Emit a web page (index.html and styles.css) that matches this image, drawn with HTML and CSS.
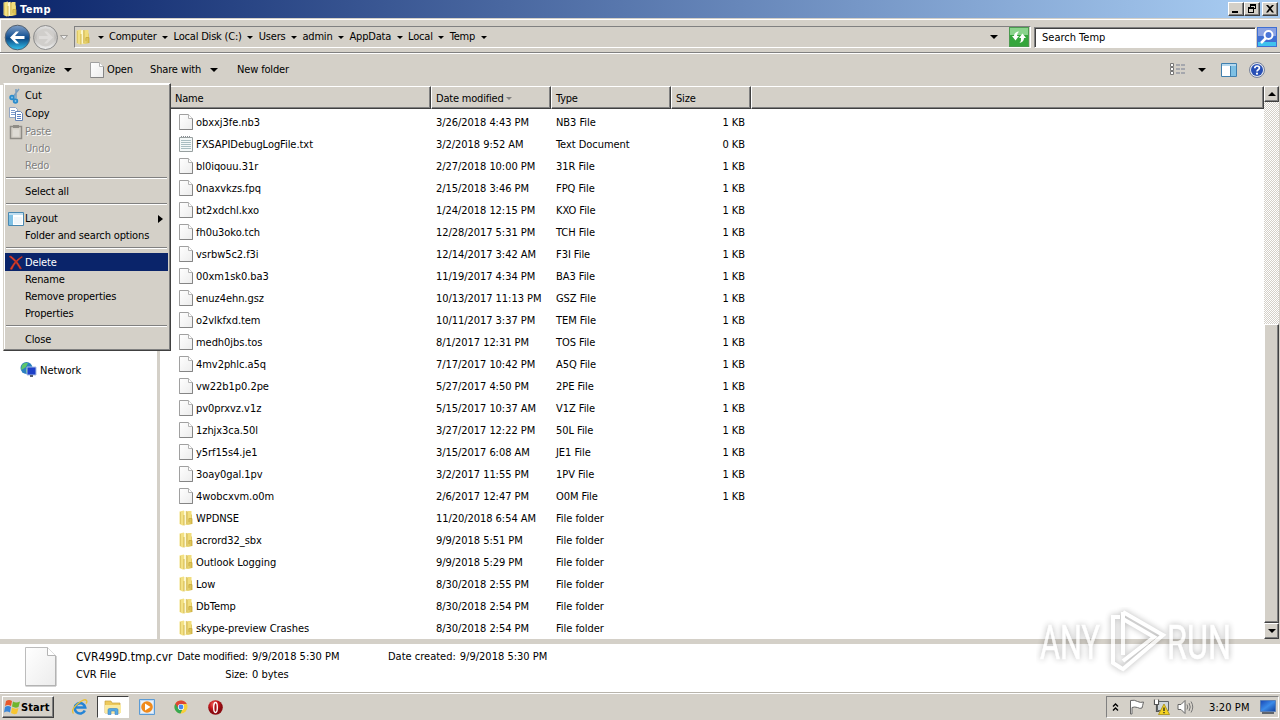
FILE: index.html
```html
<!DOCTYPE html>
<html lang="en">
<head>
  <meta charset="UTF-8">
  <title>Temp</title>
  <link rel="stylesheet" href="styles.css">
</head>
<body>

<!-- Shared icons -->
<svg class="sprites" width="0" height="0">
  <defs>
    <linearGradient id="gFolder" x1="0" x2="1"><stop offset="0" stop-color="#f8ec9a"/><stop offset="1" stop-color="#d6bb4a"/></linearGradient>
    <linearGradient id="gPage" x1="0" y1="0" x2="1" y2="1"><stop offset="0" stop-color="#fff"/><stop offset="1" stop-color="#ececec"/></linearGradient>
    <linearGradient id="gBlue" x1="0" y1="0" x2="0" y2="1"><stop offset="0" stop-color="#7f9fc8"/><stop offset=".45" stop-color="#1c5796"/><stop offset=".55" stop-color="#0d4a86"/><stop offset="1" stop-color="#35c3ef"/></linearGradient>
    <linearGradient id="gGrey" x1="0" y1="0" x2="0" y2="1"><stop offset="0" stop-color="#e2e2e2"/><stop offset=".5" stop-color="#bdbbb8"/><stop offset="1" stop-color="#f2f2f2"/></linearGradient>
    <linearGradient id="gScreen" x1="0" y1="0" x2="1" y2="1"><stop offset="0" stop-color="#1746b4"/><stop offset=".5" stop-color="#3b8be8"/><stop offset="1" stop-color="#123f9c"/></linearGradient>
    <radialGradient id="gRed" cx=".4" cy=".3"><stop offset="0" stop-color="#f47a70"/><stop offset=".6" stop-color="#c9181c"/><stop offset="1" stop-color="#8c0a10"/></radialGradient>
  </defs>
  <symbol id="page" viewBox="0 0 14 16">
    <path d="M.5.5h9l4 4v11H.5z" fill="url(#gPage)" stroke="#a0a0a0"/>
    <path d="M.5 15.5h13v-11" fill="none" stroke="#858585"/>
    <path d="M9.500.5v4h4" fill="#fff" stroke="#b4b4b4"/>
  </symbol>
  <symbol id="text" viewBox="0 0 14 16">
    <path d="M.5 1.500h13v14H.5z" fill="#f4f8f8" stroke="#98a0a0"/>
    <path d="M2 .5h10" stroke="#8a8f94" stroke-dasharray="1 1"/>
    <path d="M2 4.500h10M2 6.500h10M2 8.500h10M2 10.500h10M2 12.500h10" stroke="#a9bdc1"/>
  </symbol>
  <symbol id="folder" viewBox="0 0 14 16">
    <path d="M5 1.500h4v3h4V14l-4 1H5z" fill="url(#gFolder)"/>
    <path d="M9 1h3.500v7.500H9z" fill="#f1dd7c"/>
    <path d="M.5 1.500L5 .5v14.500l-1.500.5-3-1.500z" fill="#f3e184"/>
    <path d="M1.500 2v12" stroke="#e0c966"/>
    <path d="M5 1.500l2.500-.8V14L5 15.500z" fill="#fdf8cf"/>
    <path d="M5 15.500V5M7.800 14V1M13 14V8.500h-3V12" fill="none" stroke="#c9a93c" stroke-width=".8"/>
  </symbol>
</svg>

<div class="titlebar">
  <svg class="title-icon"><use href="#folder"/></svg>
  <span class="title-text">Temp</span>
  <div class="win-buttons">
    <span class="win-btn"><svg width="14" height="11"><path d="M3 8h6v2H3z"/></svg></span>
    <span class="win-btn"><svg width="14" height="11"><path d="M5 1h6v5H9V5h1V3H6v1H5zM3 4h6v6H3zM4 6v3h4V6z" fill-rule="evenodd"/></svg></span>
    <span class="win-btn last"><svg width="14" height="11"><path d="M3 2h2l2 2 2-2h2L8 5.500l3 4H9L7 7 5 9.500H3l3-4z"/></svg></span>
  </div>
</div>

<div class="navbar">
  <svg class="nav-arrows" width="68" height="28" viewBox="0 0 68 28">
    <circle cx="14.500" cy="14.500" r="12.300" fill="url(#gBlue)" stroke="#53606e"/>
    <path d="M7 14.500l6-6h3l-4 4.500h9.500v3H12l4 4.500h-3z" fill="#fff"/>
    <circle cx="42.500" cy="14.500" r="12" fill="url(#gGrey)" stroke="#8a8a8a"/>
    <circle cx="42.500" cy="14.500" r="9" fill="#d0cecb"/>
    <path d="M50 14.500l-6-6h-3l4 4.500h-9v3h9l-4 4.500h3z" fill="#dedcda"/>
    <path d="M57.500 12.500h7L61 16.500z" fill="#eee" stroke="#8e8c88" stroke-width=".8"/>
  </svg>
  <div class="address">
    <svg class="addr-icon"><use href="#folder"/></svg>
    <div class="crumbs" id="crumbs"></div>
    <i class="caret"></i>
    <svg class="refresh" width="20" height="20" viewBox="0 0 20 20">
      <path d="M0 0h20v20H0z" fill="#35a63c"/>
      <path d="M1 1h18v7H1z" fill="#8ad48c"/>
      <path d="M3 9l3.500 4.500L10 9H8q0-3 2-4.500Q5 5 5 9z" fill="#fff"/>
      <path d="M10 11l3.500-4.500L17 11h-2q0 4-4.500 5 2-2 1.500-5z" fill="#fff"/>
      <path d="M.5.5h19v19H.5z" fill="none" stroke="#4c9a50"/>
    </svg>
  </div>
  <div class="search">Search Temp</div>
  <svg class="search-btn" width="20" height="20" viewBox="0 0 20 20">
    <path d="M0 0h20v20H0z" fill="#3f6fd2"/>
    <path d="M1 1h18v8H1z" fill="#8aa2e2"/><path d="M1 15h18v4H1z" fill="#3ec2ee"/>
    <path d="M9 11l-5 5" stroke="#fff" stroke-width="2.500"/>
    <circle cx="11.500" cy="8" r="4" fill="#4a76d8" stroke="#fff" stroke-width="2"/>
  </svg>
</div>

<div class="toolbar">
  <span class="tool organize">Organize</span><i class="caret"></i>
  <svg class="tool-icon"><use href="#page"/></svg>
  <span class="tool open">Open</span>
  <span class="tool share">Share with</span><i class="caret"></i>
  <span class="tool new">New folder</span>
  <div class="tool-right">
    <svg width="16" height="14" viewBox="0 0 16 14">
      <path d="M.5.5h3v3h-3zM.5 4.500h3v3h-3zM.5 8.500h3v3h-3z" fill="#fff" stroke="#777"/>
      <path d="M6 2h4M11 2h4M6 6h4M11 6h4M6 10h4M11 10h4" stroke="#777f92"/>
    </svg>
    <i class="caret"></i>
    <svg class="preview" width="16" height="14" viewBox="0 0 16 14">
      <path d="M.5.5h15v13H.5z" fill="#fff" stroke="#3f7fae"/><path d="M1 1h14v2H1z" fill="#b5d8ee"/>
      <path d="M10 3h5v10h-5z" fill="#7ec0e4"/><path d="M9.500 3v10" stroke="#3f7fae"/>
    </svg>
    <svg width="16" height="16" viewBox="0 0 16 16">
      <circle cx="8" cy="8" r="7.500" fill="#e4e8f0" stroke="#75809a"/><circle cx="8" cy="8" r="6" fill="#274fb5"/>
      <path d="M5.800 6.300q0-2.300 2.300-2.300t2.300 2q0 1-1.200 1.800T8 9.600" fill="none" stroke="#fff" stroke-width="1.700"/><circle cx="8" cy="11.700" r="1.100" fill="#fff"/>
    </svg>
  </div>
</div>

<div class="main">
  <div class="tree">
    <div class="tree-item">
      <svg width="17" height="16" viewBox="0 0 17 16">
        <circle cx="6.500" cy="6" r="6" fill="#2b7fc0"/><path d="M2 3q3-3 6-2L6 5 3 7 1 8zM6 7l4-1 1 3-3 3-2-2z" fill="#5cc66a"/>
        <path d="M7 5h9v8H7z" fill="#1d3fc8" stroke="#a8bde4"/><path d="M10 13h3v2h-3z" fill="#555e75"/>
      </svg>
      <span>Network</span>
    </div>
  </div>
  <div class="list">
    <div class="list-head">
      <span class="col name">Name</span>
      <span class="col date">Date modified <i class="sort"></i></span>
      <span class="col type">Type</span>
      <span class="col size">Size</span>
      <span class="col rest"></span>
    </div>
    <div class="rows" id="rows"></div>
  </div>
  <div class="scrollbar">
    <span class="sb-btn"><i class="tri up"></i></span>
    <div class="sb-track"></div>
    <div class="sb-thumb"></div>
    <span class="sb-btn"><i class="tri down"></i></span>
  </div>
</div>

<div class="details">
  <svg class="big-page" width="32" height="40" viewBox="0 0 32 40">
    <path d="M.5.500h22l8 8v30H.5z" fill="url(#gPage)" stroke="#bcbcbc"/>
    <path d="M.5 39h30.500V9" fill="none" stroke="#aaa"/>
    <path d="M22.500.5v8h8" fill="#fff" stroke="#b4b4b4"/>
  </svg>
  <div class="file-name"><b>CVR499D.tmp.cvr</b><span>CVR File</span></div>
  <div class="labels"><span>Date modified:</span><span>Size:</span></div>
  <div class="values"><span>9/9/2018 5:30 PM</span><span>0 bytes</span></div>
  <div class="created"><span>Date created:</span><span>9/9/2018 5:30 PM</span></div>
</div>

<div class="taskbar">
  <div class="start">
    <svg width="17" height="16" viewBox="0 0 17 16">
      <path d="M2 2q3-2 6 0L7 7Q4 5 1 7z" fill="#e8582a"/><path d="M9 2.500q3 2 7 0L14.500 8q-3 1.500-6.500-.5z" fill="#6fb52e"/>
      <path d="M1 8q3-2 6 0l-1 5.500q-3-2-6 0z" fill="#3a86d8"/><path d="M8 8.500q3 2 6.500.5L13 14.500q-3 1.500-6-.5z" fill="#f7c531"/>
    </svg>
    <b>Start</b>
  </div>
  <span class="task">
    <svg width="16" height="16" viewBox="0 0 16 16">
      <path d="M12.800 11.500A5.200 5.200 0 1 1 13.200 8.500H4" fill="none" stroke="#2484d6" stroke-width="2.600"/>
      <path d="M1.500 14.500Q-1.500 11 5.500 5t9-3.500q1 1-.5 3" fill="none" stroke="#e8bf35" stroke-width="1.300"/>
    </svg>
  </span>
  <span class="task active">
    <svg width="18" height="16" viewBox="0 0 18 16">
      <path d="M1 2h6l1 2h8v10H1z" fill="#edc95c" stroke="#c9a23a" stroke-width=".7"/><path d="M1 6h16v8H1z" fill="#faeaa0"/>
      <path d="M4 15.500V11q0-1.500 1.500-1.500h7Q14 9.500 14 11v4.500h-3V12H7v3.500z" fill="#54a9e4" stroke="#3d82bf" stroke-width=".6"/>
    </svg>
  </span>
  <span class="task">
    <svg width="16" height="16" viewBox="0 0 16 16">
      <path d="M.5.500h15v15H.5z" fill="#c5dcf4" stroke="#5b9bd5"/><path d="M2 2h12v12H2z" fill="#e9f2fb"/>
      <circle cx="8" cy="8" r="5.800" fill="#f08a1c"/><path d="M6 4.500l5.500 3.500L6 11.500z" fill="#fff"/>
    </svg>
  </span>
  <span class="task">
    <svg width="14" height="14" viewBox="0 0 14 14">
      <circle cx="7" cy="7" r="6.500" fill="#f7cf3a"/><path d="M7 7L1.300 3.700A6.500 6.500 0 0 0 6.500 13.500L9 8z" fill="#37a852"/>
      <path d="M1.300 3.700A6.500 6.500 0 0 1 12.800 4H7L4.500 8.500z" fill="#dd4535"/><circle cx="7" cy="7" r="3.100" fill="#fff"/><circle cx="7" cy="7" r="2.400" fill="#4587ee"/>
    </svg>
  </span>
  <span class="task">
    <svg width="15" height="15" viewBox="0 0 15 15"><circle cx="7.500" cy="7.500" r="7.300" fill="url(#gRed)"/><ellipse cx="7.500" cy="7.500" rx="1.800" ry="5" fill="#a51015" stroke="#fff" stroke-width="1.400"/></svg>
  </span>
  <div class="tray">
    <svg width="7" height="8" viewBox="0 0 7 8"><path d="M1 3.500l2.500-2.500L6 3.500M1 7.500L3.500 5 6 7.500" fill="none" stroke="#000" stroke-width="1.400"/></svg>
    <svg class="flag" width="16" height="16" viewBox="0 0 16 16"><path d="M1.500 15V1.500q4-1 7 1 3 1.500 6 .5-1 4-1.500 6-2 1-4.500-.5-3-1-5.500 0V15z" fill="#fff" stroke="#666"/></svg>
    <svg class="net" width="17" height="16" viewBox="0 0 17 16">
      <path d="M4.500 2.500h11v9h-11z" fill="#cfd6da" stroke="#5e6468"/><path d="M1.500.500v5h4v-5M3.500 5.500v7h3" fill="none" stroke="#555" stroke-width="1.200"/>
      <path d="M2 1h3v4H2z" fill="#fff"/><path d="M11 5l5.500 10.500h-11z" fill="#f5d320" stroke="#a58b12" stroke-width=".8"/><path d="M11 8.500v3.500M11 13v1.300" stroke="#222" stroke-width="1.300"/>
    </svg>
    <svg class="vol" width="17" height="16" viewBox="0 0 17 16"><path d="M1 5.500h3l4-4v13l-4-4H1z" fill="#fff" stroke="#666"/><path d="M10 5.500q1.500 2.500 0 5M12 4q2.500 4 0 8M14 2.500q3.500 5.500 0 11" fill="none" stroke="#777"/></svg>
    <span class="clock">3:20 PM</span>
    <svg class="desk" width="16" height="14" viewBox="0 0 16 14"><path d="M.5.500h15v11H.5z" fill="url(#gScreen)" stroke="#5b7fb5"/><path d="M2 13h12" stroke="#39424f" stroke-width="1.500"/></svg>
  </div>
</div>

<!-- Organize menu -->
<div class="menu">
  <div class="item tall"><svg width="16" height="16" viewBox="0 0 16 16"><path d="M5 9l6-8M8 10L8 1" stroke="#7a9fc0" stroke-width="1.500"/><circle cx="4" cy="9.500" r="1.800" fill="#8fc6ea" stroke="#2b8ccc" stroke-width="1.800"/><circle cx="7.500" cy="13" r="1.800" fill="#8fc6ea" stroke="#2b8ccc" stroke-width="1.800"/></svg>Cut</div>
  <div class="item tall"><svg width="16" height="16" viewBox="0 0 16 16"><path d="M1.500 1.500h6l2 2v8h-8z" fill="#fff" stroke="#93a6c4"/><path d="M3 4.500h4M3 6.500h4M3 8.500h4" stroke="#7d9bcc"/><path d="M7.500 5.500h5l2 2v7h-7z" fill="#fff" stroke="#6684b5"/><path d="M9 8.500h4M9 10.500h4M9 12.500h4" stroke="#5a7fc0"/></svg>Copy</div>
  <div class="item tall off"><svg width="16" height="16" viewBox="0 0 16 16"><path d="M2.500 2.500h11v12h-11z" fill="#d4d0c8" stroke="#8f8c86" stroke-width="1.500"/><path d="M5 1h6v3H5z" fill="#8f8c86"/><path d="M5 5.500h6v7H5z" fill="#dedbd5"/></svg>Paste</div>
  <div class="item off">Undo</div>
  <div class="item off">Redo</div>
  <hr>
  <div class="item">Select all</div>
  <hr>
  <div class="item tall"><svg class="layout" width="16" height="14" viewBox="0 0 16 14"><path d="M.5.500h15v13H.5z" fill="#fff" stroke="#4a88b0"/><path d="M1 1h14v2H1z" fill="#c0def0"/><path d="M1 3h4v10H1z" fill="#7ec0e4"/><path d="M6 5h8v7H6z" fill="#f0f6fa"/></svg>Layout<i class="submenu"></i></div>
  <div class="item">Folder and search options</div>
  <hr>
  <div class="item tall selected"><svg width="16" height="16" viewBox="0 0 16 16"><path d="M1 1.500l2-.5q6 4 10.500 12.500L12 14Q8 6 1 1.500zM13.500 1.500l1 .5Q7 7 4 14.500L2 14Q6 6 13.500 1.500z" fill="#e0452f" stroke="#b52a1c" stroke-width=".6"/></svg>Delete</div>
  <div class="item">Rename</div>
  <div class="item">Remove properties</div>
  <div class="item">Properties</div>
  <hr>
  <div class="item">Close</div>
</div>

<svg class="watermark" width="208" height="76" viewBox="0 0 208 76">
  <g class="mark">
    <text x="4" y="52" textLength="60" lengthAdjust="spacingAndGlyphs">ANY</text>
    <text x="131" y="52" textLength="64" lengthAdjust="spacingAndGlyphs">RUN</text>
    <path d="M84 10h-7v46l8 5M87 5l40 23-40 34-4-2M87 5v43M87 12l31 18-31 24"/>
  </g>
</svg>

<script src="script.js"></script>
</body>
</html>
```

FILE: styles.css
```css
* {
  box-sizing: border-box;
}

body {
  margin: 0;
  width: 1280px;
  height: 720px;
  overflow: hidden;
  display: flex;
  flex-direction: column;
  position: relative;
  background: #d4d0c8;
  color: #000;
  font-family: "DejaVu Sans Condensed", "DejaVu Sans", sans-serif;
  font-size: 11px;
  letter-spacing: -0.15px;
  line-height: 14px;
  white-space: nowrap;
}

svg {
  display: block;
  flex: none;
}

.sprites {
  position: absolute;
}

.caret {
  width: 0;
  border: 4px solid transparent;
  border-top-color: #000;
  border-bottom: 0;
}

/* --- TITLE BAR --- */
.titlebar {
  height: 18px;
  flex: none;
  display: flex;
  align-items: center;
  padding: 0 2px 0 3px;
  background: linear-gradient(90deg, #0a246a, #a6caf0 97%);
}

.title-icon {
  width: 14px;
  height: 16px;
}

.title-text {
  margin-left: 3px;
  padding-top: 1px;
  color: #fff;
  font-weight: bold;
  letter-spacing: 0.4px;
}

.win-buttons {
  margin-left: auto;
  display: flex;
}

.win-btn {
  width: 16px;
  height: 14px;
  background: #d4d0c8;
  border: 1px solid;
  border-color: #fff #404040 #404040 #fff;
  box-shadow: inset -1px -1px #808080;
}

.win-btn.last {
  margin-left: 2px;
}

/* --- NAVIGATION --- */
.navbar {
  height: 36px;
  flex: none;
  display: flex;
  align-items: center;
  padding: 2px 2px 0 3px;
  border-top: 1px solid #d4d0c8;
  border-bottom: 1px solid #fff;
  box-shadow: inset 0 1px #fff, inset 0 -1px #808080, inset 1px 0 #fff;
}

.address {
  height: 22px;
  width: 957px;
  margin-left: 3px;
  display: flex;
  align-items: center;
  border: 1px solid;
  border-color: #808080 #fff #fff #808080;
}

.addr-icon {
  width: 14px;
  height: 16px;
  margin-left: 1px;
}

.crumbs {
  flex: 1;
  display: flex;
  align-items: center;
  padding-left: 2px;
  letter-spacing: -0.2px;
}

.crumbs .sep {
  width: 17px;
  display: flex;
  justify-content: center;
}

.crumbs .caret {
  border-width: 3px 3px 0;
}

.refresh {
  margin: 0 1px 0 11px;
}

.search {
  width: 222px;
  height: 21px;
  margin-left: 3px;
  padding: 3px 7px;
  background: #fff;
  border: 1px solid;
  border-color: #808080 #fff #fff #808080;
  box-shadow: inset 1px 1px #404040;
  letter-spacing: 0;
}

.search-btn {
  margin-left: 1px;
}

/* --- COMMAND BAR --- */
.toolbar {
  height: 31px;
  flex: none;
  display: flex;
  align-items: center;
  padding: 1px 0 0 12px;
}

.organize {
  width: 52px;
}

.tool-icon {
  width: 14px;
  height: 16px;
  margin-left: 18px;
}

.open {
  width: 43px;
  margin-left: 3px;
}

.share {
  width: 60px;
}

.new {
  margin-left: 19px;
}

.tool-right {
  margin-left: auto;
  padding-right: 15px;
  display: flex;
  align-items: center;
}

.tool-right .caret {
  margin-left: 12px;
}

.preview {
  margin: 0 12px 0 15px;
}

/* --- FILE LIST --- */
.main {
  height: 554px;
  flex: none;
  display: flex;
}

.tree {
  width: 160px;
  background: #fff;
  border-right: 3px solid #d4d0c8;
}

.tree-item {
  display: flex;
  align-items: center;
  gap: 3px;
  padding: 277px 0 0 20px;
  letter-spacing: 0;
}

.tree-item span {
  padding-top: 2px;
}

.list {
  flex: 1;
  background: #fff;
}

.list-head {
  height: 24px;
  display: flex;
  margin-left: 10px;
  border-top: 1px solid #d4d0c8;
  letter-spacing: -0.2px;
}

.col {
  background: #d4d0c8;
  border: 1px solid;
  border-color: #fff #404040 #404040 #fff;
  box-shadow: inset -1px -1px #808080;
  padding: 5px 4px;
}

.name { width: 261px; }
.date { width: 120px; }
.type { width: 120px; }
.size { width: 80px; }

.rest {
  flex: 1;
}

.sort {
  display: inline-block;
  vertical-align: 2px;
  border: 3px solid transparent;
  border-top-color: #808080;
  border-bottom: 0;
}

.rows {
  padding: 2px 0 0 19px;
  letter-spacing: -0.05px;
}

.row {
  height: 22px;
  display: flex;
  align-items: center;
}

.row svg {
  width: 14px;
  height: 16px;
  margin-bottom: 1px;
}

.row span {
  padding-top: 1px;
}

.row .f-name {
  width: 240px;
  margin-left: 3px;
}

.row .f-date { width: 120px; }
.row .f-type { width: 120px; }

.row .f-size {
  width: 69px;
  text-align: right;
}

/* --- SCROLLBAR --- */
.scrollbar {
  width: 16px;
  display: flex;
  flex-direction: column;
  padding: 1px 1px 0 0;
}

.sb-btn,
.sb-thumb {
  background: #d4d0c8;
  border: 1px solid;
  border-color: #fff #404040 #404040 #fff;
  box-shadow: inset -1px -1px #808080;
}

.sb-btn {
  height: 16px;
  display: flex;
  align-items: center;
  justify-content: center;
}

.sb-track {
  height: 222px;
  background: repeating-conic-gradient(#d4d0c8 0 25%, #fff 0 50%) 0 0 / 2px 2px;
}

.sb-thumb {
  flex: 1;
}

.tri {
  border: 4px solid transparent;
}

.tri.up {
  border-top: 0;
  border-bottom-color: #000;
}

.tri.down {
  border-bottom: 0;
  border-top-color: #000;
}

/* --- DETAILS PANE --- */
.details {
  height: 54px;
  flex: none;
  display: flex;
  background: #fff;
  border-top: 5px solid #d4d0c8;
  border-bottom: 1px solid #b8b4ac;
  padding: 3px 0 0 25px;
  letter-spacing: 0;
}

.details div {
  display: flex;
  flex-direction: column;
  gap: 4px;
  padding-top: 3px;
}

.file-name {
  width: 101px;
  margin-left: 19px;
}

.file-name b {
  font-size: 12px;
  font-weight: normal;
}

.labels {
  width: 71px;
  align-items: flex-end;
  letter-spacing: -0.2px;
}

.values {
  width: 132px;
  margin-left: 4px;
}

.details .created {
  flex-direction: row;
  margin-left: 4px;
}

/* --- TASKBAR --- */
.taskbar {
  flex: 1;
  display: flex;
  align-items: center;
  border-top: 1px solid #fff;
  padding: 0 1px 0 2px;
}

.start {
  width: 52px;
  height: 22px;
  margin-right: 9px;
  display: flex;
  align-items: center;
  padding-left: 1px;
  border: 1px solid;
  border-color: #fff #404040 #404040 #fff;
  box-shadow: inset -1px -1px #808080;
}

.start b {
  padding-top: 1px;
  letter-spacing: 0.1px;
}

.task {
  width: 34px;
  height: 22px;
  display: flex;
  align-items: center;
  justify-content: center;
}

.task.active {
  width: 32px;
  margin-right: 1px;
  background: #fff;
  border: 1px solid;
  border-color: #404040 #fff #fff #404040;
}

.tray {
  width: 173px;
  height: 22px;
  margin-left: auto;
  display: flex;
  align-items: center;
  padding-left: 5px;
  border: 1px solid;
  border-color: #808080 #fff #fff #808080;
}

.flag { margin-left: 10px; }
.net { margin-left: 8px; }
.vol { margin-left: 7px; }

.clock {
  width: 40px;
  margin-left: 15px;
  padding-top: 1px;
  letter-spacing: 0.1px;
}

.desk {
  margin-left: 11px;
}

/* --- ORGANIZE MENU --- */
.menu {
  position: absolute;
  left: 3px;
  top: 83px;
  width: 168px;
  height: 268px;
  padding: 2px 2px 2px 1px;
  background: #d4d0c8;
  border: 1px solid;
  border-color: #fff #404040 #404040 #d4d0c8;
  box-shadow: inset -1px -1px #808080, inset 1px 1px #fff;
}

.item {
  height: 17px;
  display: flex;
  align-items: center;
  position: relative;
  padding-left: 20px;
}

.item.tall {
  height: 18px;
  padding-top: 1px;
}

.item svg {
  margin: 0 1px 0 -17px;
}

.item.off {
  color: #808080;
  text-shadow: 1px 1px #fff;
}

.item.selected {
  background: #0a246a;
  color: #fff;
}

.menu hr {
  height: 2px;
  margin: 3px 1px 4px;
  border: 0;
  border-top: 1px solid #808080;
  border-bottom: 1px solid #fff;
}

.submenu {
  margin-left: auto;
  margin-right: 5px;
  border: 4px solid transparent;
  border-left: 5px solid #000;
  border-right: 0;
}

/* --- WATERMARK --- */
.watermark {
  position: absolute;
  left: 1036px;
  top: 607px;
}

.mark {
  fill: #fff;
  opacity: 0.75;
  font-family: Roboto, sans-serif;
  font-size: 49px;
  letter-spacing: 0;
  filter: drop-shadow(0 0 3px rgba(0, 0, 0, 0.4));
}

.mark text {
  stroke: #fff;
  stroke-width: 0.6;
}

.mark path {
  fill: none;
  stroke: #fff;
  stroke-width: 4;
}
```

FILE: script.js
```js
const crumbs = ["Computer", "Local Disk (C:)", "Users", "admin", "AppData", "Local", "Temp"];

const files = [
  ["page", "obxxj3fe.nb3", "3/26/2018 4:43 PM", "NB3 File", "1 KB"],
  ["text", "FXSAPIDebugLogFile.txt", "3/2/2018 9:52 AM", "Text Document", "0 KB"],
  ["page", "bl0iqouu.31r", "2/27/2018 10:00 PM", "31R File", "1 KB"],
  ["page", "0naxvkzs.fpq", "2/15/2018 3:46 PM", "FPQ File", "1 KB"],
  ["page", "bt2xdchl.kxo", "1/24/2018 12:15 PM", "KXO File", "1 KB"],
  ["page", "fh0u3oko.tch", "12/28/2017 5:31 PM", "TCH File", "1 KB"],
  ["page", "vsrbw5c2.f3i", "12/14/2017 3:42 AM", "F3I File", "1 KB"],
  ["page", "00xm1sk0.ba3", "11/19/2017 4:34 PM", "BA3 File", "1 KB"],
  ["page", "enuz4ehn.gsz", "10/13/2017 11:13 PM", "GSZ File", "1 KB"],
  ["page", "o2vlkfxd.tem", "10/11/2017 3:37 PM", "TEM File", "1 KB"],
  ["page", "medh0jbs.tos", "8/1/2017 12:31 PM", "TOS File", "1 KB"],
  ["page", "4mv2phlc.a5q", "7/17/2017 10:42 PM", "A5Q File", "1 KB"],
  ["page", "vw22b1p0.2pe", "5/27/2017 4:50 PM", "2PE File", "1 KB"],
  ["page", "pv0prxvz.v1z", "5/15/2017 10:37 AM", "V1Z File", "1 KB"],
  ["page", "1zhjx3ca.50l", "3/27/2017 12:22 PM", "50L File", "1 KB"],
  ["page", "y5rf15s4.je1", "3/15/2017 6:08 AM", "JE1 File", "1 KB"],
  ["page", "3oay0gal.1pv", "3/2/2017 11:55 PM", "1PV File", "1 KB"],
  ["page", "4wobcxvm.o0m", "2/6/2017 12:47 PM", "O0M File", "1 KB"],
  ["folder", "WPDNSE", "11/20/2018 6:54 AM", "File folder", ""],
  ["folder", "acrord32_sbx", "9/9/2018 5:51 PM", "File folder", ""],
  ["folder", "Outlook Logging", "9/9/2018 5:29 PM", "File folder", ""],
  ["folder", "Low", "8/30/2018 2:55 PM", "File folder", ""],
  ["folder", "DbTemp", "8/30/2018 2:54 PM", "File folder", ""],
  ["folder", "skype-preview Crashes", "8/30/2018 2:54 PM", "File folder", ""]
];

const sep = '<span class="sep"><i class="caret"></i></span>';
document.getElementById("crumbs").innerHTML =
  sep + crumbs.map(name => `<span>${name}</span>`).join(sep) + sep;

document.getElementById("rows").innerHTML = files.map(([icon, name, date, type, size]) => `
  <div class="row">
    <svg><use href="#${icon}"/></svg>
    <span class="f-name">${name}</span>
    <span class="f-date">${date}</span>
    <span class="f-type">${type}</span>
    <span class="f-size">${size}</span>
  </div>`).join("");
```
